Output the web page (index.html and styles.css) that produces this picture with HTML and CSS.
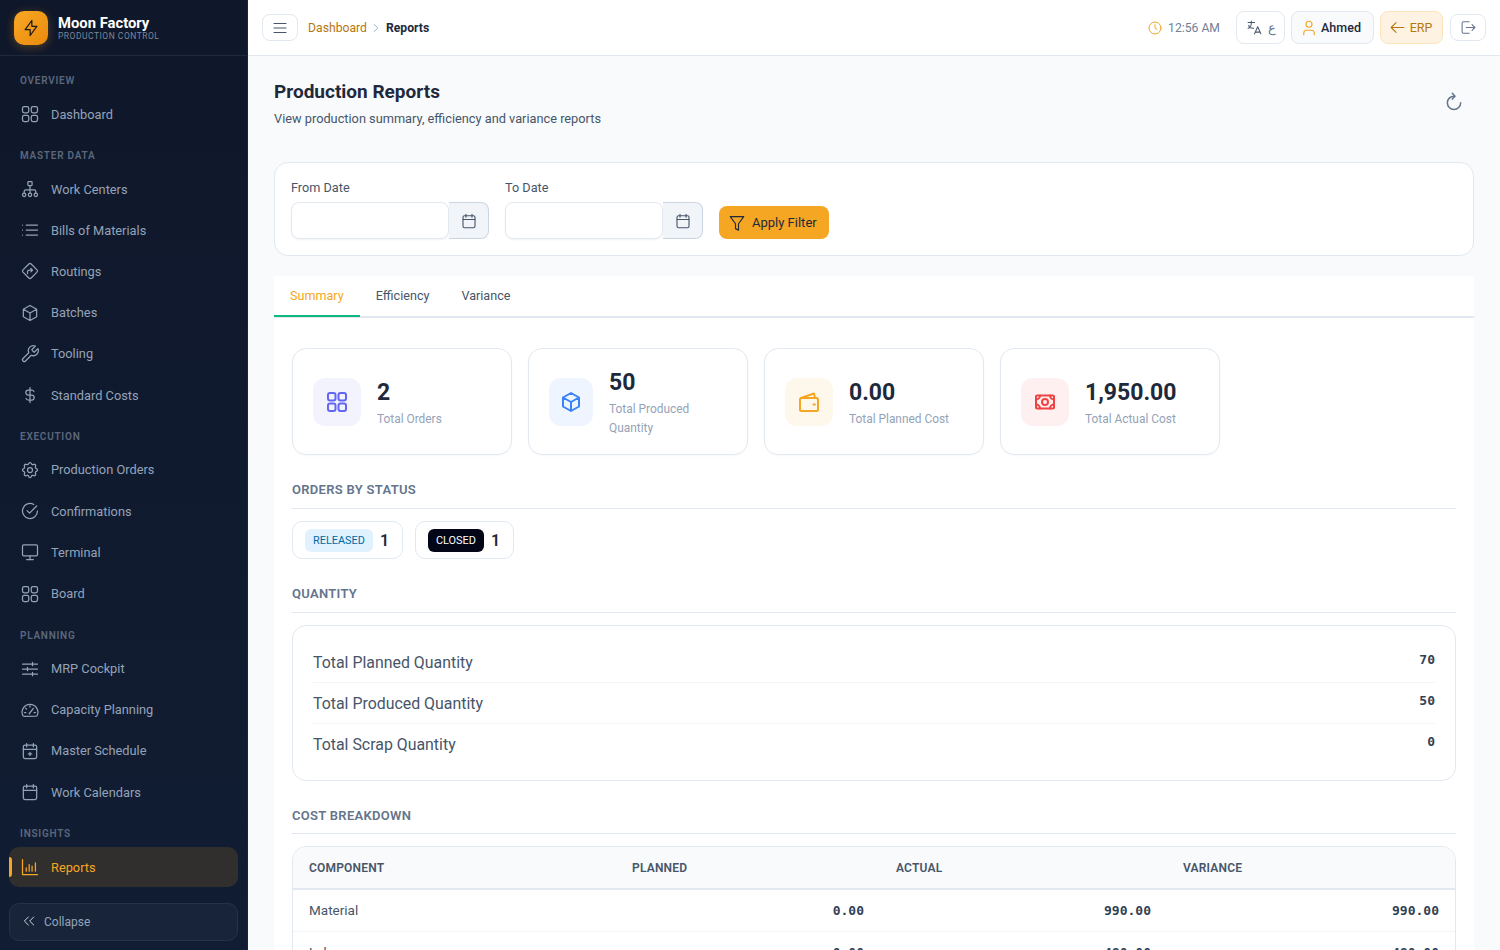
FILE: index.html
```html
<!DOCTYPE html>
<html lang="en">

<head>
    <meta charset="UTF-8" />
    <meta name="viewport" content="width=device-width, initial-scale=1.0" />
    <title>Production Reports</title>
    <link rel="stylesheet" href="styles.css">
</head>

<body>
    <!-- icon sprite -->
    <svg class="sprite" xmlns="http://www.w3.org/2000/svg">
        <symbol id="i-grid" viewBox="0 0 24 24"><rect x="3" y="3" width="7.5" height="7.5" rx="2"/><rect x="13.5" y="3" width="7.5" height="7.5" rx="2"/><rect x="3" y="13.5" width="7.5" height="7.5" rx="2"/><rect x="13.5" y="13.5" width="7.5" height="7.5" rx="2"/></symbol>
        <symbol id="i-sitemap" viewBox="0 0 24 24"><rect x="9.5" y="3" width="5" height="5" rx="1"/><circle cx="5" cy="19" r="2"/><circle cx="12" cy="19" r="2"/><circle cx="19" cy="19" r="2"/><path d="M12 8v9M5 17v-2a2 2 0 0 1 2-2h10a2 2 0 0 1 2 2v2"/></symbol>
        <symbol id="i-list" viewBox="0 0 24 24"><path d="M7.5 6H21M7.5 12H21M7.5 18H21M3 6h.01M3 12h.01M3 18h.01"/></symbol>
        <symbol id="i-route" viewBox="0 0 24 24"><path d="M10.6 3.6a2 2 0 0 1 2.8 0l7 7a2 2 0 0 1 0 2.8l-7 7a2 2 0 0 1-2.8 0l-7-7a2 2 0 0 1 0-2.8z"/><path d="M9 15v-2a2 2 0 0 1 2-2h4M13 9l2 2-2 2"/></symbol>
        <symbol id="i-box" viewBox="0 0 24 24"><path d="M12 3l8 4.5v9L12 21l-8-4.5v-9zM12 12l8-4.5M12 12v9M12 12L4 7.500"/></symbol>
        <symbol id="i-tool" viewBox="0 0 24 24"><path d="M14.700 6.300a1 1 0 0 0 0 1.400l1.600 1.600a1 1 0 0 0 1.400 0l3.770-3.770a6 6 0 0 1-7.940 7.940l-6.910 6.910a2.120 2.120 0 0 1-3-3l6.910-6.910a6 6 0 0 1 7.940-7.940l-3.760 3.760z"/></symbol>
        <symbol id="i-dollar" viewBox="0 0 24 24"><path d="M16.700 8A3 3 0 0 0 14 6h-4a3 3 0 0 0 0 6h4a3 3 0 0 1 0 6h-4a3 3 0 0 1-2.700-2M12 3v18"/></symbol>
        <symbol id="i-gear" viewBox="0 0 24 24"><path d="M10.325 4.317c.426-1.756 2.924-1.756 3.350 0a1.724 1.724 0 0 0 2.573 1.066c1.543-.94 3.310.826 2.370 2.370a1.724 1.724 0 0 0 1.065 2.572c1.756.426 1.756 2.924 0 3.350a1.724 1.724 0 0 0-1.066 2.573c.94 1.543-.826 3.310-2.370 2.370a1.724 1.724 0 0 0-2.572 1.065c-.426 1.756-2.924 1.756-3.350 0a1.724 1.724 0 0 0-2.573-1.066c-1.543.94-3.310-.826-2.370-2.370a1.724 1.724 0 0 0-1.065-2.572c-1.756-.426-1.756-2.924 0-3.350a1.724 1.724 0 0 0 1.066-2.573c-.94-1.543.826-3.310 2.370-2.370 1 .608 2.296.07 2.572-1.065z"/><circle cx="12" cy="12" r="3"/></symbol>
        <symbol id="i-check" viewBox="0 0 24 24"><path d="M21 12a9 9 0 1 1-4.500-7.800"/><path d="M8.500 11.500l3 3L20 6"/></symbol>
        <symbol id="i-monitor" viewBox="0 0 24 24"><rect x="3" y="3.500" width="18" height="13" rx="1.500"/><path d="M8 21h8M12 16.500V21"/></symbol>
        <symbol id="i-sliders" viewBox="0 0 24 24"><path d="M3 6h18M3 12h18M3 18h18M15 4v4M9 10v4M15 16v4"/></symbol>
        <symbol id="i-gauge" viewBox="0 0 24 24"><path d="M5 19.500a2 2 0 0 1-1.800-1.200A9.500 9.500 0 1 1 20.800 18.300 2 2 0 0 1 19 19.500z"/><path d="M11 16.500l5-6.500M12 7v1.500M6.800 9.800l1 1M5.500 15H7M17 15h1.500"/></symbol>
        <symbol id="i-cal-plus" viewBox="0 0 24 24"><rect x="4" y="5" width="16" height="16" rx="2"/><path d="M16 3v4M8 3v4M4 10h16M10 15.500h4M12 13.500v4"/></symbol>
        <symbol id="i-cal" viewBox="0 0 24 24"><rect x="4" y="5" width="16" height="16" rx="2"/><path d="M16 3v4M8 3v4M4 10h16"/></symbol>
        <symbol id="i-chart" viewBox="0 0 24 24"><path d="M3 3v18h18M7.500 17v-4M11 17V9M14.500 17v-6M18.500 17V7"/></symbol>
        <symbol id="i-bolt" viewBox="0 0 24 24"><path d="M13 3v7h6l-8 11v-7H5l8-11"/></symbol>
        <symbol id="i-chevrons" viewBox="0 0 24 24"><path d="M11 6l-6 6 6 6M19 6l-6 6 6 6"/></symbol>
        <symbol id="i-menu" viewBox="0 0 24 24"><path d="M4 6h16M4 12h16M4 18h16"/></symbol>
        <symbol id="i-chev-right" viewBox="0 0 24 24"><path d="M9 6l6 6-6 6"/></symbol>
        <symbol id="i-clock" viewBox="0 0 24 24"><circle cx="12" cy="12" r="9"/><path d="M12 7v5l3 2"/></symbol>
        <symbol id="i-lang" viewBox="0 0 24 24"><path d="M3 5h9M7.500 3v2c0 4.400-2 8-4.500 8M4 9c0 2.100 2.900 3.900 6.700 4M12 21l4.500-10 4.500 10M19.900 18.500h-6.800"/></symbol>
        <symbol id="i-user" viewBox="0 0 24 24"><circle cx="12" cy="7" r="4"/><path d="M5 21v-2a4 4 0 0 1 4-4h6a4 4 0 0 1 4 4v2"/></symbol>
        <symbol id="i-arrow-left" viewBox="0 0 24 24"><path d="M3 12h18M3 12l7 7M3 12l7-7"/></symbol>
        <symbol id="i-logout" viewBox="0 0 24 24"><path d="M13 4H5a2 2 0 0 0-2 2v12a2 2 0 0 0 2 2h8M9 12h12M17 8l4 4-4 4"/></symbol>
        <symbol id="i-reload" viewBox="0 0 24 24"><path d="M12 5a8 8 0 1 0 8 8"/><path d="M10 1.500L13.200 5 10 8.500"/></symbol>
        <symbol id="i-funnel" viewBox="0 0 24 24"><path d="M3 3.500h18l-7 9.500v8.500l-4-2v-6.500z"/></symbol>
        <symbol id="i-wallet" viewBox="0 0 24 24"><rect x="3" y="8" width="18" height="13" rx="1.500"/><path d="M4 8l13-4.500L18 8M16.500 14.500H18"/></symbol>
        <symbol id="i-cash" viewBox="0 0 24 24"><rect x="3" y="5.500" width="18" height="13" rx="1"/><circle cx="12" cy="12" r="3"/><path d="M3 9.500A4 4 0 0 0 7 5.500M17 5.500a4 4 0 0 0 4 4M21 14.500a4 4 0 0 0-4 4M7 18.500a4 4 0 0 0-4-4"/></symbol>
    </svg>

    <aside class="sidebar">
        <div class="brand">
            <div class="brand-logo"><svg class="icon"><use href="#i-bolt"/></svg></div>
            <div>
                <div class="brand-name">Moon Factory</div>
                <div class="brand-sub">PRODUCTION CONTROL</div>
            </div>
        </div>

        <nav class="nav">
            <div class="nav-title">OVERVIEW</div>
            <a class="nav-item"><svg class="icon"><use href="#i-grid"/></svg>Dashboard</a>

            <div class="nav-title">MASTER DATA</div>
            <a class="nav-item"><svg class="icon"><use href="#i-sitemap"/></svg>Work Centers</a>
            <a class="nav-item"><svg class="icon"><use href="#i-list"/></svg>Bills of Materials</a>
            <a class="nav-item"><svg class="icon"><use href="#i-route"/></svg>Routings</a>
            <a class="nav-item"><svg class="icon"><use href="#i-box"/></svg>Batches</a>
            <a class="nav-item"><svg class="icon"><use href="#i-tool"/></svg>Tooling</a>
            <a class="nav-item"><svg class="icon"><use href="#i-dollar"/></svg>Standard Costs</a>

            <div class="nav-title">EXECUTION</div>
            <a class="nav-item"><svg class="icon"><use href="#i-gear"/></svg>Production Orders</a>
            <a class="nav-item"><svg class="icon"><use href="#i-check"/></svg>Confirmations</a>
            <a class="nav-item"><svg class="icon"><use href="#i-monitor"/></svg>Terminal</a>
            <a class="nav-item"><svg class="icon"><use href="#i-grid"/></svg>Board</a>

            <div class="nav-title">PLANNING</div>
            <a class="nav-item"><svg class="icon"><use href="#i-sliders"/></svg>MRP Cockpit</a>
            <a class="nav-item"><svg class="icon"><use href="#i-gauge"/></svg>Capacity Planning</a>
            <a class="nav-item"><svg class="icon"><use href="#i-cal-plus"/></svg>Master Schedule</a>
            <a class="nav-item"><svg class="icon"><use href="#i-cal"/></svg>Work Calendars</a>

            <div class="nav-title">INSIGHTS</div>
            <a class="nav-item active"><svg class="icon"><use href="#i-chart"/></svg>Reports</a>
        </nav>

        <button class="collapse-btn"><svg class="icon"><use href="#i-chevrons"/></svg>Collapse</button>
    </aside>

    <div class="main">
        <header class="topbar">
            <button class="top-btn menu-btn"><svg class="icon"><use href="#i-menu"/></svg></button>
            <div class="crumbs">
                <a class="crumb-link">Dashboard</a>
                <svg class="icon crumb-sep"><use href="#i-chev-right"/></svg>
                <span class="crumb-current">Reports</span>
            </div>
            <div class="top-right">
                <div class="clock"><svg class="icon"><use href="#i-clock"/></svg>12:56 AM</div>
                <button class="top-btn lang-btn"><svg class="icon"><use href="#i-lang"/></svg><span>ع</span></button>
                <button class="top-btn user-btn"><svg class="icon"><use href="#i-user"/></svg>Ahmed</button>
                <button class="top-btn erp-btn"><svg class="icon"><use href="#i-arrow-left"/></svg>ERP</button>
                <button class="top-btn logout-btn"><svg class="icon"><use href="#i-logout"/></svg></button>
            </div>
        </header>

        <main class="content">
            <div class="page-head">
                <div>
                    <h1 class="page-title">Production Reports</h1>
                    <p class="page-sub">View production summary, efficiency and variance reports</p>
                </div>
                <svg class="icon reload"><use href="#i-reload"/></svg>
            </div>

            <div class="filter-card">
                <div class="field">
                    <label>From Date</label>
                    <div class="date-input">
                        <input type="text">
                        <span class="addon"><svg class="icon"><use href="#i-cal"/></svg></span>
                    </div>
                </div>
                <div class="field">
                    <label>To Date</label>
                    <div class="date-input">
                        <input type="text">
                        <span class="addon"><svg class="icon"><use href="#i-cal"/></svg></span>
                    </div>
                </div>
                <button class="apply-btn"><svg class="icon"><use href="#i-funnel"/></svg>Apply Filter</button>
            </div>

            <div class="panel">
                <div class="tabs">
                    <div class="tab active">Summary</div>
                    <div class="tab">Efficiency</div>
                    <div class="tab">Variance</div>
                </div>

                <div class="tab-body">
                    <div class="stats">
                        <div class="stat-card">
                            <div class="stat-icon indigo"><svg class="icon"><use href="#i-grid"/></svg></div>
                            <div>
                                <div class="stat-value">2</div>
                                <div class="stat-label">Total Orders</div>
                            </div>
                        </div>
                        <div class="stat-card">
                            <div class="stat-icon blue narrow"><svg class="icon"><use href="#i-box"/></svg></div>
                            <div>
                                <div class="stat-value">50</div>
                                <div class="stat-label">Total Produced<br>Quantity</div>
                            </div>
                        </div>
                        <div class="stat-card">
                            <div class="stat-icon amber"><svg class="icon"><use href="#i-wallet"/></svg></div>
                            <div>
                                <div class="stat-value">0.00</div>
                                <div class="stat-label">Total Planned Cost</div>
                            </div>
                        </div>
                        <div class="stat-card">
                            <div class="stat-icon red"><svg class="icon"><use href="#i-cash"/></svg></div>
                            <div>
                                <div class="stat-value">1,950.00</div>
                                <div class="stat-label">Total Actual Cost</div>
                            </div>
                        </div>
                    </div>

                    <h2 class="section-title">ORDERS BY STATUS</h2>
                    <div class="chips">
                        <div class="chip"><span class="badge released">RELEASED</span><b>1</b></div>
                        <div class="chip"><span class="badge closed">CLOSED</span><b>1</b></div>
                    </div>

                    <h2 class="section-title">QUANTITY</h2>
                    <div class="qty-card">
                        <div class="qty-row"><span>Total Planned Quantity</span><span class="num">70</span></div>
                        <div class="qty-row"><span>Total Produced Quantity</span><span class="num">50</span></div>
                        <div class="qty-row"><span>Total Scrap Quantity</span><span class="num">0</span></div>
                    </div>

                    <h2 class="section-title tight">COST BREAKDOWN</h2>
                    <div class="table-wrap">
                        <table class="cost-table">
                            <thead>
                                <tr>
                                    <th class="col-name">COMPONENT</th>
                                    <th class="col-planned">PLANNED</th>
                                    <th class="col-actual">ACTUAL</th>
                                    <th>VARIANCE</th>
                                </tr>
                            </thead>
                            <tbody>
                                <tr><td>Material</td><td class="num">0.00</td><td class="num">990.00</td><td class="num">990.00</td></tr>
                                <tr><td>Labor</td><td class="num">0.00</td><td class="num">480.00</td><td class="num">480.00</td></tr>
                            </tbody>
                        </table>
                    </div>
                </div>
            </div>
        </main>
    </div>
</body>

</html>
```

FILE: styles.css
```css
/* base */

* {
    box-sizing: border-box;
}

body {
    margin: 0;
    height: 100vh;
    overflow: hidden;
    display: flex;
    font-family: Roboto, "Liberation Sans", sans-serif;
    font-size: 13px;
    background-color: #f8fafc;
    color: #0f172a;
}

button {
    font-family: inherit;
}

.sprite {
    display: none;
}

.icon {
    width: 20px;
    height: 20px;
    flex-shrink: 0;
    fill: none;
    stroke: currentColor;
    stroke-width: 1.5;
    stroke-linecap: round;
    stroke-linejoin: round;
}

/* sidebar */

.sidebar {
    width: 248px;
    flex-shrink: 0;
    height: 100vh;
    display: flex;
    flex-direction: column;
    background: linear-gradient(180deg, #0f172a, #111d33);
    border-right: 1px solid #1a2538;
}

.brand {
    height: 56px;
    flex-shrink: 0;
    display: flex;
    align-items: center;
    gap: 10px;
    padding-left: 14px;
    border-bottom: 1px solid #1e293b;
}

.brand-logo {
    width: 34px;
    height: 34px;
    display: flex;
    align-items: center;
    justify-content: center;
    color: #1e1b16;
    background: linear-gradient(135deg, #f9a825, #ea8a0c);
    border-radius: 10px;
    box-shadow: 0 2px 10px rgba(245, 166, 35, 0.3);
}

.brand-name {
    font-size: 14.800px;
    font-weight: 700;
    line-height: 16px;
    color: #ffffff;
}

.brand-sub {
    font-size: 8.500px;
    line-height: 10px;
    letter-spacing: 0.5px;
    color: #7a889c;
}

.nav {
    flex: 1;
    padding: 4.700px 9px 0;
    overflow: hidden;
}

.nav-title {
    height: 33.8px;
    padding: 12.500px 0 0 11px;
    font-size: 10px;
    line-height: 15px;
    font-weight: 600;
    letter-spacing: 0.75px;
    color: #5b687c;
}

.nav-item {
    height: 39.2px;
    margin-bottom: 2px;
    display: flex;
    align-items: center;
    gap: 11px;
    padding-left: 11px;
    font-size: 12.800px;
    color: #94a3b8;
    border-radius: 10px;
}

.nav-item.active {
    position: relative;
    color: #f5a623;
    background-color: #312f2e;
}

.nav-item.active::before {
    content: "";
    position: absolute;
    left: 0;
    top: 10px;
    bottom: 10px;
    width: 3px;
    background-color: #f5a623;
    border-radius: 0 3px 3px 0;
}

.collapse-btn {
    flex-shrink: 0;
    height: 38px;
    margin: 0 9px 9px;
    display: flex;
    align-items: center;
    gap: 7px;
    padding-left: 11px;
    font-size: 12px;
    color: #94a3b8;
    background-color: #18243a;
    border: 1px solid #263347;
    border-radius: 10px;
}

.collapse-btn .icon {
    width: 16px;
    height: 16px;
    margin-bottom: 2px;
    color: #cbd5e1;
}

/* top bar */

.main {
    flex: 1;
    min-width: 0;
    display: flex;
    flex-direction: column;
}

.topbar {
    height: 56px;
    flex-shrink: 0;
    display: flex;
    align-items: center;
    padding: 0 14px;
    background-color: #ffffff;
    border-bottom: 1px solid #e2e8f0;
}

.top-btn {
    display: flex;
    align-items: center;
    justify-content: center;
    background-color: #ffffff;
    border: 1px solid #e2e8f0;
    border-radius: 8px;
    font-size: 13px;
    color: #475569;
}

.menu-btn {
    width: 36px;
    height: 27px;
    margin-right: 10px;
}

.menu-btn .icon {
    width: 18px;
    height: 18px;
    color: #475569;
}

.crumbs {
    display: flex;
    align-items: center;
    gap: 2px;
    font-size: 12.200px;
}

.crumb-link {
    color: #b8760f;
}

.crumb-sep {
    width: 14px;
    height: 14px;
    color: #94a3b8;
    margin-right: 1px;
}

.crumb-current {
    font-weight: 700;
    color: #1e293b;
}

.top-right {
    margin-left: auto;
    display: flex;
    align-items: center;
    gap: 6px;
}

.clock {
    display: flex;
    align-items: center;
    gap: 5px;
    margin-right: 10px;
    font-size: 12.200px;
    color: #718096;
}

.clock .icon {
    width: 16px;
    height: 16px;
    color: #f5a623;
}

.lang-btn {
    width: 49px;
    height: 33px;
    gap: 5px;
}

.lang-btn .icon {
    width: 17px;
    height: 17px;
}

.lang-btn span {
    font-weight: 300;
    color: #64748b;
}

.user-btn {
    width: 83px;
    height: 33px;
    gap: 3px;
    padding: 0 4px 0 0;
    font-size: 12.500px;
    color: #1e293b;
    font-weight: 500;
    background-color: #f8fafc;
}

.user-btn .icon {
    width: 18px;
    height: 18px;
    color: #f5a623;
}

.erp-btn {
    width: 63px;
    height: 33px;
    gap: 4px;
    padding: 0 2px 0 0;
    font-size: 12.500px;
    color: #b8760f;
    background-color: #fef3e2;
    border-color: #fde3bb;
}

.erp-btn .icon {
    width: 17px;
    height: 17px;
}

.logout-btn {
    width: 36px;
    height: 27px;
    margin-left: 1px;
    color: #64748b;
}

.logout-btn .icon {
    width: 17px;
    height: 17px;
}

/* page */

.content {
    flex: 1;
    overflow: hidden;
    padding: 21px 26px 0;
}

.page-head {
    display: flex;
    justify-content: space-between;
    align-items: center;
    margin-bottom: 34px;
}

.page-title {
    margin: 0;
    font-size: 19px;
    line-height: 30px;
    font-weight: 700;
    color: #1e293b;
}

.page-sub {
    margin: 3px 0 0;
    font-size: 12.770px;
    line-height: 18px;
    color: #475569;
}

.reload {
    width: 20px;
    height: 20px;
    margin: 0 10px 2px 0;
    stroke-width: 1.800;
    color: #64748b;
}

.filter-card {
    height: 94px;
    display: flex;
    align-items: flex-end;
    gap: 16px;
    padding: 16px;
    background-color: #ffffff;
    border: 1px solid #e2e8f0;
    border-radius: 14px;
}

.field label {
    display: block;
    line-height: 20px;
    margin-bottom: 4px;
    font-size: 12.700px;
    color: #475569;
}

.date-input {
    display: flex;
    height: 37px;
}

.date-input input {
    width: 158px;
    border: 1px solid #e2e8f0;
    border-radius: 8px;
    background-color: #ffffff;
    box-shadow: 0 1px 2px rgba(15, 23, 42, 0.05);
}

.addon {
    width: 40px;
    display: flex;
    align-items: center;
    justify-content: center;
    color: #475569;
    background-color: #f1f5f9;
    border: 1px solid #cbd5e1;
    border-left: none;
    border-radius: 0 8px 8px 0;
}

.addon .icon {
    width: 18px;
    height: 18px;
}

.apply-btn {
    height: 33px;
    width: 110px;
    display: flex;
    align-items: center;
    gap: 6px;
    padding: 0 0 0 9px;
    font-size: 13px;
    color: #1e293b;
    background-color: #f5a623;
    border: none;
    border-radius: 8px;
}

.apply-btn .icon {
    width: 18px;
    height: 18px;
}

/* tabs */

.panel {
    margin-top: 20px;
    background-color: #ffffff;
}

.tabs {
    display: flex;
    height: 42px;
    border-bottom: 2px solid #e2e8f0;
}

.tab {
    height: 42px;
    padding: 0 16px;
    line-height: 39px;
    font-size: 12.600px;
    color: #475569;
}

.tab.active {
    color: #f5a623;
    border-bottom: 2px solid #10b981;
    height: 41px;
}

.tab-body {
    padding: 30px 18px 0;
}

/* stat cards */

.stats {
    display: grid;
    grid-template-columns: repeat(5, 220px);
    gap: 16px;
}

.stat-card {
    height: 107px;
    display: flex;
    align-items: center;
    gap: 16px;
    padding: 0 20px;
    border: 1px solid #e2e8f0;
    border-radius: 14px;
    box-shadow: 0 1px 2px rgba(15, 23, 42, 0.03);
}

.stat-icon {
    width: 48px;
    height: 48px;
    flex-shrink: 0;
    display: flex;
    align-items: center;
    justify-content: center;
    border-radius: 12px;
}

.stat-icon .icon {
    width: 24px;
    height: 24px;
    stroke-width: 2;
}

.stat-icon.narrow {
    width: 44px;
}

.indigo { color: #6366f1; background-color: #f3f3fe; }
.blue { color: #3b82f6; background-color: #eff5ff; }
.amber { color: #f5a623; background-color: #fef8ec; }
.red { color: #ef4444; background-color: #fef0f0; }

.stat-value {
    margin-top: 4px;
    font-size: 23px;
    line-height: 28px;
    font-weight: 700;
    color: #1e293b;
}

.stat-label {
    margin-top: 3px;
    line-height: 19px;
    font-size: 11.900px;
    color: #94a3b8;
}

/* sections */

.section-title {
    height: 29px;
    margin: 25px 0 12px;
    font-size: 13px;
    line-height: 19px;
    font-weight: 600;
    letter-spacing: 0.3px;
    color: #64748b;
    border-bottom: 1px solid #e2e8f0;
}

.section-title.tight {
    height: 28px;
}

.chips {
    display: flex;
    gap: 12px;
}

.chip {
    height: 38px;
    display: flex;
    align-items: center;
    gap: 7px;
    padding: 0 13px 0 12px;
    border: 1px solid #e2e8f0;
    border-radius: 10px;
}

.chip b {
    font-size: 16px;
    color: #1e293b;
    font-weight: 600;
}

.badge {
    height: 23px;
    padding: 0 8px;
    line-height: 23px;
    font-size: 10.900px;
    border-radius: 6px;
}

.released {
    color: #0369a1;
    background-color: #e0f2fe;
}

.closed {
    color: #ffffff;
    background-color: #020617;
}

.qty-card {
    padding: 16px 20px;
    border: 1px solid #e2e8f0;
    border-radius: 14px;
}

.qty-row {
    height: 41px;
    padding-top: 1px;
    display: flex;
    justify-content: space-between;
    align-items: center;
    font-size: 15.900px;
    color: #475569;
    border-bottom: 1px solid #f1f5f9;
}

.qty-row:last-child {
    height: 40px;
    border-bottom: none;
}

.qty-row .num {
    margin-bottom: 6px;
}

.num {
    font-family: "DejaVu Sans Mono", "Liberation Mono", monospace;
    font-size: 13px;
    font-weight: 700;
    color: #334155;
}

/* cost table */

.table-wrap {
    border: 1px solid #e2e8f0;
    border-radius: 14px;
    overflow: hidden;
}

.cost-table {
    width: 100%;
    table-layout: fixed;
    border-collapse: collapse;
}

.cost-table th {
    height: 42px;
    padding: 0 16px;
    text-align: left;
    font-size: 12px;
    font-weight: 600;
    letter-spacing: 0.2px;
    color: #475569;
    background-color: #f8fafc;
    border-bottom: 2px solid #e2e8f0;
}

.col-name { width: 323px; }
.col-planned { width: 264px; }
.col-actual { width: 287px; }

.cost-table td {
    height: 42px;
    padding: 0 16px;
    color: #475569;
    font-size: 13.500px;
    border-bottom: 1px solid #f1f5f9;
}

.cost-table td.num {
    text-align: right;
    font-size: 13px;
    color: #334155;
}
```
